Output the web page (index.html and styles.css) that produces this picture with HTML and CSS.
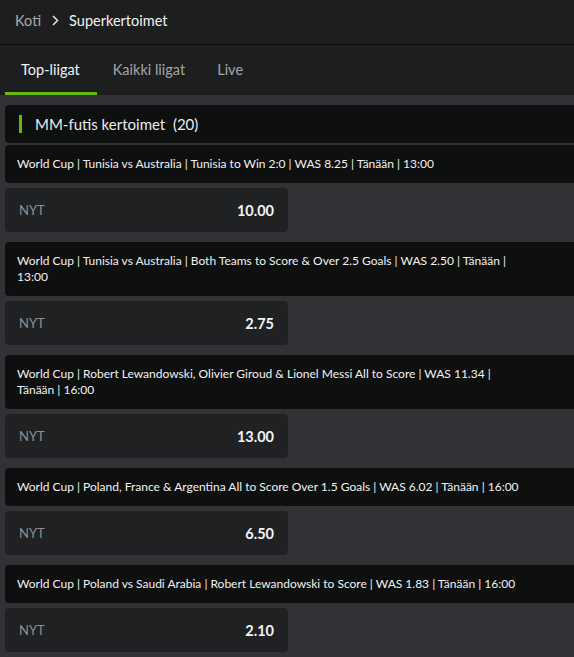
FILE: index.html
```html
<!DOCTYPE html>
<html lang="fi">
<head>
<meta charset="utf-8">
<title>Superkertoimet</title>
<link rel="stylesheet" href="styles.css">
</head>
<body>
<header class="crumbs">
  <span class="crumb-home">Koti</span>
  <svg class="chev" width="7" height="11" viewBox="0 0 7 11"><path d="M1 1l4.5 4.5L1 10" fill="none" stroke="#e6e6e6" stroke-width="1.5"/></svg>
  <span class="crumb-current">Superkertoimet</span>
</header>
<nav class="tabs">
  <div class="tab active">Top-liigat</div>
  <div class="tab">Kaikki liigat</div>
  <div class="tab">Live</div>
</nav>
<main class="content">
  <div class="section-head"><span class="mark"></span><span class="section-title">MM-futis kertoimet&nbsp; (20)</span></div>
  <div class="offer">
    <div class="offer-text"><p>World Cup | Tunisia vs Australia | Tunisia to Win 2:0 | WAS 8.25 | Tänään | 13:00</p></div>
    <div class="odds"><span class="now">NYT</span><span class="price">10.00</span></div>
  </div>
  <div class="offer">
    <div class="offer-text"><p>World Cup | Tunisia vs Australia | Both Teams to Score &amp; Over 2.5 Goals | WAS 2.50 | Tänään | 13:00</p></div>
    <div class="odds"><span class="now">NYT</span><span class="price">2.75</span></div>
  </div>
  <div class="offer">
    <div class="offer-text"><p>World Cup | Robert Lewandowski, Olivier Giroud &amp; Lionel Messi All to Score | WAS 11.34 | Tänään | 16:00</p></div>
    <div class="odds"><span class="now">NYT</span><span class="price">13.00</span></div>
  </div>
  <div class="offer">
    <div class="offer-text"><p>World Cup | Poland, France &amp; Argentina All to Score Over 1.5 Goals | WAS 6.02 | Tänään | 16:00</p></div>
    <div class="odds"><span class="now">NYT</span><span class="price">6.50</span></div>
  </div>
  <div class="offer">
    <div class="offer-text"><p>World Cup | Poland vs Saudi Arabia | Robert Lewandowski to Score | WAS 1.83 | Tänään | 16:00</p></div>
    <div class="odds"><span class="now">NYT</span><span class="price">2.10</span></div>
  </div>
</main>
</body>
</html>
```
FILE: styles.css
```css
html, body {
  margin: 0;
  padding: 0;
  background: #303236;
  font-family: Lato, Roboto, sans-serif;
  color: #ececec;
}
.crumbs {
  height: 45px;
  box-sizing: border-box;
  background: #1d1e20;
  border-bottom: 1px solid #0c0c0d;
  display: flex;
  align-items: center;
  padding: 0 0 4px 15px;
  font-size: 14px;
}
.crumb-home { color: #a9abad; font-size: 14.5px; }
.chev { margin: 0 10px 0 11px; }
.crumb-current { color: #f2f2f2; font-size: 14.5px; }
.tabs {
  height: 50px;
  background: #1d1e20;
  display: flex;
  padding-left: 5px;
}
.tab {
  font-size: 14.5px;
  color: #a4a6a8;
  padding: 0 16px;
  display: flex;
  align-items: center;
  box-sizing: border-box;
  border-bottom: 3px solid transparent;
  padding-top: 1px;
}
.tab.active {
  color: #f2f2f2;
  border-bottom-color: #67b80c;
  padding-right: 17px;
}
.content {
  padding: 10px 0 4px 5px;
}
.section-head {
  height: 38px;
  background: #0e0f0f;
  border-radius: 4px 0 0 4px;
  display: flex;
  align-items: center;
  padding-left: 14px;
  margin-bottom: 2px;
}
.mark {
  width: 3px;
  height: 18px;
  background: #67b80c;
  margin-right: 13px;
}
.section-title { font-size: 15px; color: #ececec; }
.offer { margin-bottom: 10px; }
.offer-text {
  background: #0e0f0f;
  border-radius: 4px 0 0 4px;
  padding: 11px 0 11px 12px;
}
.offer-text p {
  margin: 0;
  max-width: 510px;
  font-size: 12px;
  line-height: 16px;
  color: #f2f2f2;
}
.odds {
  margin-top: 5px;
  width: 283px;
  height: 44px;
  box-sizing: border-box;
  background: #202123;
  border-radius: 4px;
  display: flex;
  align-items: center;
  justify-content: space-between;
  padding: 0 14px;
}
.now { font-size: 13px; color: #8e9092; }
.price { font-size: 14.5px; font-weight: 700; color: #f4f4f4; }
```
